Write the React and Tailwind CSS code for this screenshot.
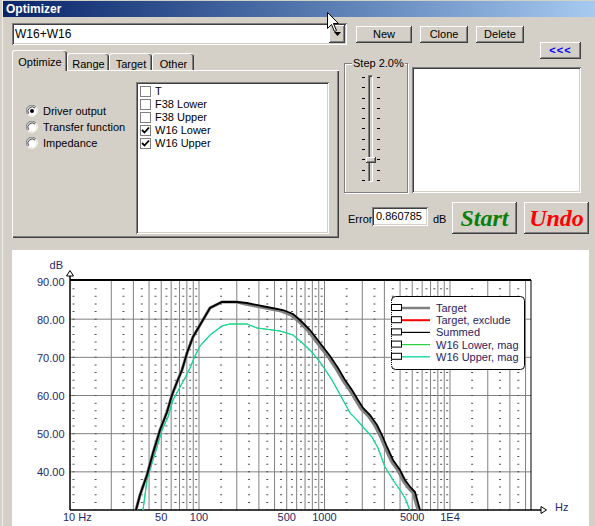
import React from "react";

const RAISED =
  "bg-[#d4d0c8] shadow-[inset_-1px_-1px_0_#404040,inset_1px_1px_0_#ffffff,inset_-2px_-2px_0_#808080,inset_2px_2px_0_#d4d0c8]";
const SUNKEN =
  "bg-white shadow-[inset_1px_1px_0_#808080,inset_-1px_-1px_0_#ffffff,inset_2px_2px_0_#404040,inset_-2px_-2px_0_#d4d0c8]";

// chart scales (page pixel coordinates)
const X = (f) => 73.5 + 125.5 * (Math.log10(f) - 1);
const Y = (db) => 281 + (90 - db) * 3.817;

const solidX = [];
const dashX = [X(10)];
[10, 100, 1000, 10000].forEach((d) => {
  for (let m = 1; m <= 9; m++) {
    const f = m * d;
    if (f > 10 && X(f) < 530) solidX.push(X(f));
    const h = (m + 0.5) * d;
    if (X(h) < 530) dashX.push(X(h));
  }
});

const BLACK =
  "136,510 140,495 147,475 153,453 160,430 167,412 172,395 177,382 182,370 187,353 193,337 200,325 210,308 222,302 237,302 247,303 267,307 283,310 293,314 300,320 310,330 320,343 330,356 338,368 345,380 352,390 358,400 363,408 370,415 377,425 382,435 387,447 393,460 400,470 405,480 411,488 415,492 418,503 420,510";
// target sits just under the summed curve, a little lower-left on the falling side
const GRAY = BLACK.split(" ")
  .map((p) => {
    const [x, y] = p.split(",").map(Number);
    return x > 237 ? `${x - 1.8},${Math.min(510, y + 1)}` : p;
  })
  .join(" ");
const CYAN =
  "143,510 147,480 152,463 157,447 162,430 168,417 173,400 180,387 185,378 190,368 195,356 200,346 210,335 222,326 230,324 247,324 257,328 280,331 293,335 300,341 310,350 320,362 332,380 343,400 350,413 357,420 363,427 372,437 378,448 385,467 393,480 400,490 405,498 409,508 410,510";

const LEGEND = [
  { label: "Target", color: "#808080", w: 2.5 },
  { label: "Target, exclude", color: "#ff0000", w: 2 },
  { label: "Summed", color: "#000000", w: 1.2 },
  { label: "W16 Lower, mag", color: "#2ccf3c", w: 1.2 },
  { label: "W16 Upper, mag", color: "#12dca0", w: 1.4 },
];

const Chart = () => (
  <svg width="577" height="276" viewBox="12 250 577 276" className="block">
    {/* horizontal grid */}
    {[80, 70, 60, 50, 40].map((db) => (
      <line key={db} x1="70" x2="531" y1={Y(db)} y2={Y(db)} stroke="#808080" strokeWidth="1" />
    ))}
    {/* vertical grid */}
    {solidX.map((x, i) => (
      <line key={"s" + i} x1={x} x2={x} y1="281" y2="510" stroke="#808080" strokeWidth="1" />
    ))}
    {dashX.map((x, i) => (
      <line
        key={"d" + i}
        x1={x}
        x2={x}
        y1={281 + 7.634 - 0.5}
        y2="510"
        stroke="#505050"
        strokeWidth="2"
        strokeDasharray="1 6.634"
      />
    ))}
    {/* frame */}
    <line x1="70" x2="531" y1="280" y2="280" stroke="#000" strokeWidth="2" />
    <line x1="531" x2="531" y1="280" y2="510" stroke="#000" strokeWidth="1" />
    <line x1="70" x2="70" y1="273" y2="510" stroke="#000" strokeWidth="1.5" />
    <line x1="70" x2="542" y1="510" y2="510" stroke="#000" strokeWidth="1.5" />
    <path d="M66.5 276 L70 270.5 L73.5 276 Z" fill="#fff" stroke="#000" strokeWidth="1" />
    <path d="M541 506.5 L546.5 510 L541 513.5 Z" fill="#fff" stroke="#000" strokeWidth="1" />

    {/* curves */}
    <polyline points={CYAN} fill="none" stroke="#2ccf3c" strokeWidth="1" />
    <polyline points={CYAN} fill="none" stroke="#14d8a2" strokeWidth="1.2" />
    <polyline points={GRAY} fill="none" stroke="#808080" strokeWidth="3" />
    <polyline points={BLACK} fill="none" stroke="#000" strokeWidth="1.8" />

    {/* axis labels */}
    <g fontFamily="Liberation Sans, Arial, sans-serif" fontSize="11" fill="#1f2a66">
      <text x="63" y="269" textAnchor="end">dB</text>
      {[90, 80, 70, 60, 50, 40].map((db) => (
        <text key={db} x="64.5" y={Y(db) + 4.5} textAnchor="end">
          {db}.00
        </text>
      ))}
      <text x="63" y="521">10 Hz</text>
      <text x={X(50)} y="521" textAnchor="middle">50</text>
      <text x={X(100)} y="521" textAnchor="middle">100</text>
      <text x={X(500)} y="521" textAnchor="middle">500</text>
      <text x={X(1000)} y="521" textAnchor="middle">1000</text>
      <text x={X(5000)} y="521" textAnchor="middle">5000</text>
      <text x={X(10000)} y="521" textAnchor="middle">1E4</text>
      <text x="555" y="511">Hz</text>
    </g>

    {/* legend */}
    <rect x="391.5" y="296.5" width="133" height="73" rx="4" fill="#fff" stroke="#000" strokeWidth="1" />
    <line x1="391.5" x2="391.5" y1="300" y2="366" stroke="#fff" strokeWidth="1.2" />
    <line x1="391.5" x2="391.5" y1="300" y2="366" stroke="#000" strokeWidth="1" strokeDasharray="1 1" />
    {LEGEND.map((l, i) => {
      const cy = 308 + i * 12.2;
      return (
        <g key={l.label}>
          <line x1="401" x2="430" y1={cy} y2={cy} stroke={l.color} strokeWidth={l.w} />
          <rect x="391.5" y={cy - 3.5} width="10" height="6" fill="#fff" stroke="#000" strokeWidth="1" />
          <text x="436" y={cy + 4} fontFamily="Liberation Sans, Arial, sans-serif" fontSize="11" fill="#2a2262">
            {l.label}
          </text>
        </g>
      );
    })}
  </svg>
);

const Radio = ({ on }) => (
  <svg width="12" height="12" viewBox="0 0 12 12">
    <path d="M10 2 A5.5 5.5 0 0 0 1.6 9.4" fill="none" stroke="#808080" strokeWidth="1" />
    <path d="M1.6 9.4 A5.5 5.5 0 0 0 10 2" fill="none" stroke="#ffffff" strokeWidth="1" />
    <circle cx="6" cy="6" r="4.5" fill="#fff" />
    <path d="M9 3 A4.3 4.3 0 0 0 2.6 8.6" fill="none" stroke="#404040" strokeWidth="1" />
    {on && <circle cx="6" cy="6" r="2" fill="#000" />}
  </svg>
);

const Check = ({ on, label }) => (
  <div className="flex h-[13px] items-center">
    <div className="ml-[4px] flex h-[11px] w-[11px] items-center justify-center border border-[#808080] bg-white">
      {on && (
        <svg width="9" height="9" viewBox="0 0 9 9">
          <path d="M1 4 L3.5 6.5 L8 1.5" fill="none" stroke="#000" strokeWidth="1.8" />
        </svg>
      )}
    </div>
    <span className="ml-[4px] leading-none">{label}</span>
  </div>
);

const Btn = ({ className, children }) => (
  <div className={`flex items-center justify-center ${RAISED} ${className}`}>{children}</div>
);

export default function App() {
  const ticks = Array.from({ length: 11 });
  return (
    <div className="relative flex h-[526px] w-[595px] overflow-hidden bg-[#d4d0c8] font-['Liberation_Sans',Arial,sans-serif] text-[11px] text-black">
      {/* background window edge */}
      <div className="w-[3px] shrink-0 border-r border-[#f0eee9] bg-[#d4d0c8]" />

      <div className="flex flex-1 flex-col">
        {/* title bar */}
        <div className="mt-[1px] flex h-[16px] items-center bg-gradient-to-r from-[#0a246a] to-[#a6caf0] pl-[3px] text-[12px] font-bold text-white">
          Optimizer
        </div>

        {/* name combo + buttons */}
        <div className="ml-[9px] mt-[6px] flex items-start">
          <div className={`flex h-[22px] w-[335px] items-center ${SUNKEN}`}>
            <span className="flex-1 pl-[3px] text-[12px]">W16+W16</span>
            <div className={`mr-[2px] flex h-[18px] w-[16px] items-center justify-center ${RAISED}`}>
              <svg width="7" height="4" viewBox="0 0 7 4">
                <path d="M0 0 H7 L3.5 4 Z" fill="#000" />
              </svg>
            </div>
          </div>
          <Btn className="ml-[9px] mt-[3px] h-[17px] w-[56px]">New</Btn>
          <Btn className="ml-[8px] mt-[3px] h-[17px] w-[48px]">Clone</Btn>
          <Btn className="ml-[8px] mt-[3px] h-[17px] w-[48px]">Delete</Btn>
        </div>

        {/* main controls */}
        <div className="ml-[9px] flex items-start">
          {/* tab control */}
          <div className="flex w-[327px] flex-col">
            <div className="mt-[5px] flex h-[20px] items-end">
              <div className="relative z-10 -mb-[1px] flex h-[21px] w-[55px] items-start justify-center rounded-t-[3px] border-l border-t border-white bg-[#d4d0c8] pt-[3px] shadow-[inset_-1px_0_0_#404040,inset_-2px_0_0_#808080]">
                Optimize
              </div>
              <div className="flex h-[17px] w-[42px] items-start justify-center rounded-t-[3px] border-l border-t border-white pt-[2px] shadow-[inset_-1px_0_0_#404040,inset_-2px_0_0_#808080]">
                Range
              </div>
              <div className="flex h-[17px] w-[43px] items-start justify-center rounded-t-[3px] border-l border-t border-white pt-[2px] shadow-[inset_-1px_0_0_#404040,inset_-2px_0_0_#808080]">
                Target
              </div>
              <div className="flex h-[17px] w-[42px] items-start justify-center rounded-t-[3px] border-l border-t border-white pt-[2px] shadow-[inset_-1px_0_0_#404040,inset_-2px_0_0_#808080]">
                Other
              </div>
            </div>
            <div className="flex h-[168px] items-start border-l border-t border-white shadow-[inset_-1px_-1px_0_#404040,inset_-2px_-2px_0_#808080]">
              <div className="ml-[13px] mt-[32px] flex w-[110px] flex-col">
                {[
                  ["Driver output", true],
                  ["Transfer function", false],
                  ["Impedance", false],
                ].map(([t, on]) => (
                  <div key={t} className="flex h-[16px] items-center">
                    <Radio on={on} />
                    <span className="ml-[5px]">{t}</span>
                  </div>
                ))}
              </div>
              <div className={`mt-[11px] flex h-[152px] w-[193px] flex-col pt-[3px] ${SUNKEN}`}>
                <Check label="T" />
                <Check label="F38 Lower" />
                <Check label="F38 Upper" />
                <Check on label="W16 Lower" />
                <Check on label="W16 Upper" />
              </div>
            </div>
          </div>

          {/* right column */}
          <div className="ml-[5px] flex w-[245px] flex-col">
            <Btn className="-mt-[3px] ml-[196px] h-[17px] w-[41px] font-bold tracking-[1px] text-[#0000ff]">
              &lt;&lt;&lt;
            </Btn>
            <div className="mt-[4px] flex items-start">
              {/* step group */}
              <div className="relative flex h-[130px] w-[64px] items-start border border-[#808080] shadow-[inset_1px_1px_0_#ffffff,1px_1px_0_#ffffff]">
                <span className="absolute -top-[7px] left-[7px] bg-[#d4d0c8] px-[1px] leading-[12px]">Step 2.0%</span>
                <div className="ml-[17px] mt-[13px] flex h-[104px] w-[3px] flex-col justify-between">
                  {ticks.map((_, i) => (
                    <div key={i} className="h-px w-[3px] bg-black" />
                  ))}
                </div>
                <div className="relative ml-[3px] mt-[11px] h-[107px] w-[5px] border-l border-t border-[#808080] border-r-white border-b-white border-r border-b shadow-[inset_1px_1px_0_#404040]">
                  <div className={`absolute -left-[3px] top-[81px] h-[6px] w-[10px] ${RAISED}`} />
                </div>
                <div className="ml-[4px] mt-[13px] flex h-[104px] w-[3px] flex-col justify-between">
                  {ticks.map((_, i) => (
                    <div key={i} className="h-px w-[3px] bg-black" />
                  ))}
                </div>
              </div>
              <div className={`ml-[4px] mt-[4px] h-[126px] w-[169px] ${SUNKEN}`} />
            </div>
            {/* error + start/undo */}
            <div className="mt-[9px] flex items-start">
              <span className="ml-[4px] mt-[9px] w-[24px]">Error</span>
              <div className={`mt-[5px] flex h-[19px] w-[56px] items-center pl-[4px] ${SUNKEN}`}>0.860785</div>
              <span className="ml-[5px] mt-[9px] w-[14px]">dB</span>
              <Btn className="ml-[5px] h-[32px] w-[65px] font-['Liberation_Serif',serif] text-[24px] font-bold italic text-[#0a800a]">
                Start
              </Btn>
              <Btn className="ml-[7px] h-[32px] w-[65px] font-['Liberation_Serif',serif] text-[24px] font-bold italic text-[#ff0000]">
                Undo
              </Btn>
            </div>
          </div>
        </div>

        {/* chart */}
        <div className="ml-[9px] mt-[12px] h-[276px] w-[577px] bg-white">
          <Chart />
        </div>
      </div>

      {/* mouse pointer */}
      <svg className="absolute left-[327px] top-[12px]" width="13" height="21" viewBox="0 0 13 21">
        <path d="M0.5 0.5 L0.5 16.5 L4.5 12.5 L7.5 19.5 L9.5 18.5 L6.5 11.5 L11.5 11.5 Z" fill="#fff" stroke="#000" strokeWidth="1" />
      </svg>
    </div>
  );
}
